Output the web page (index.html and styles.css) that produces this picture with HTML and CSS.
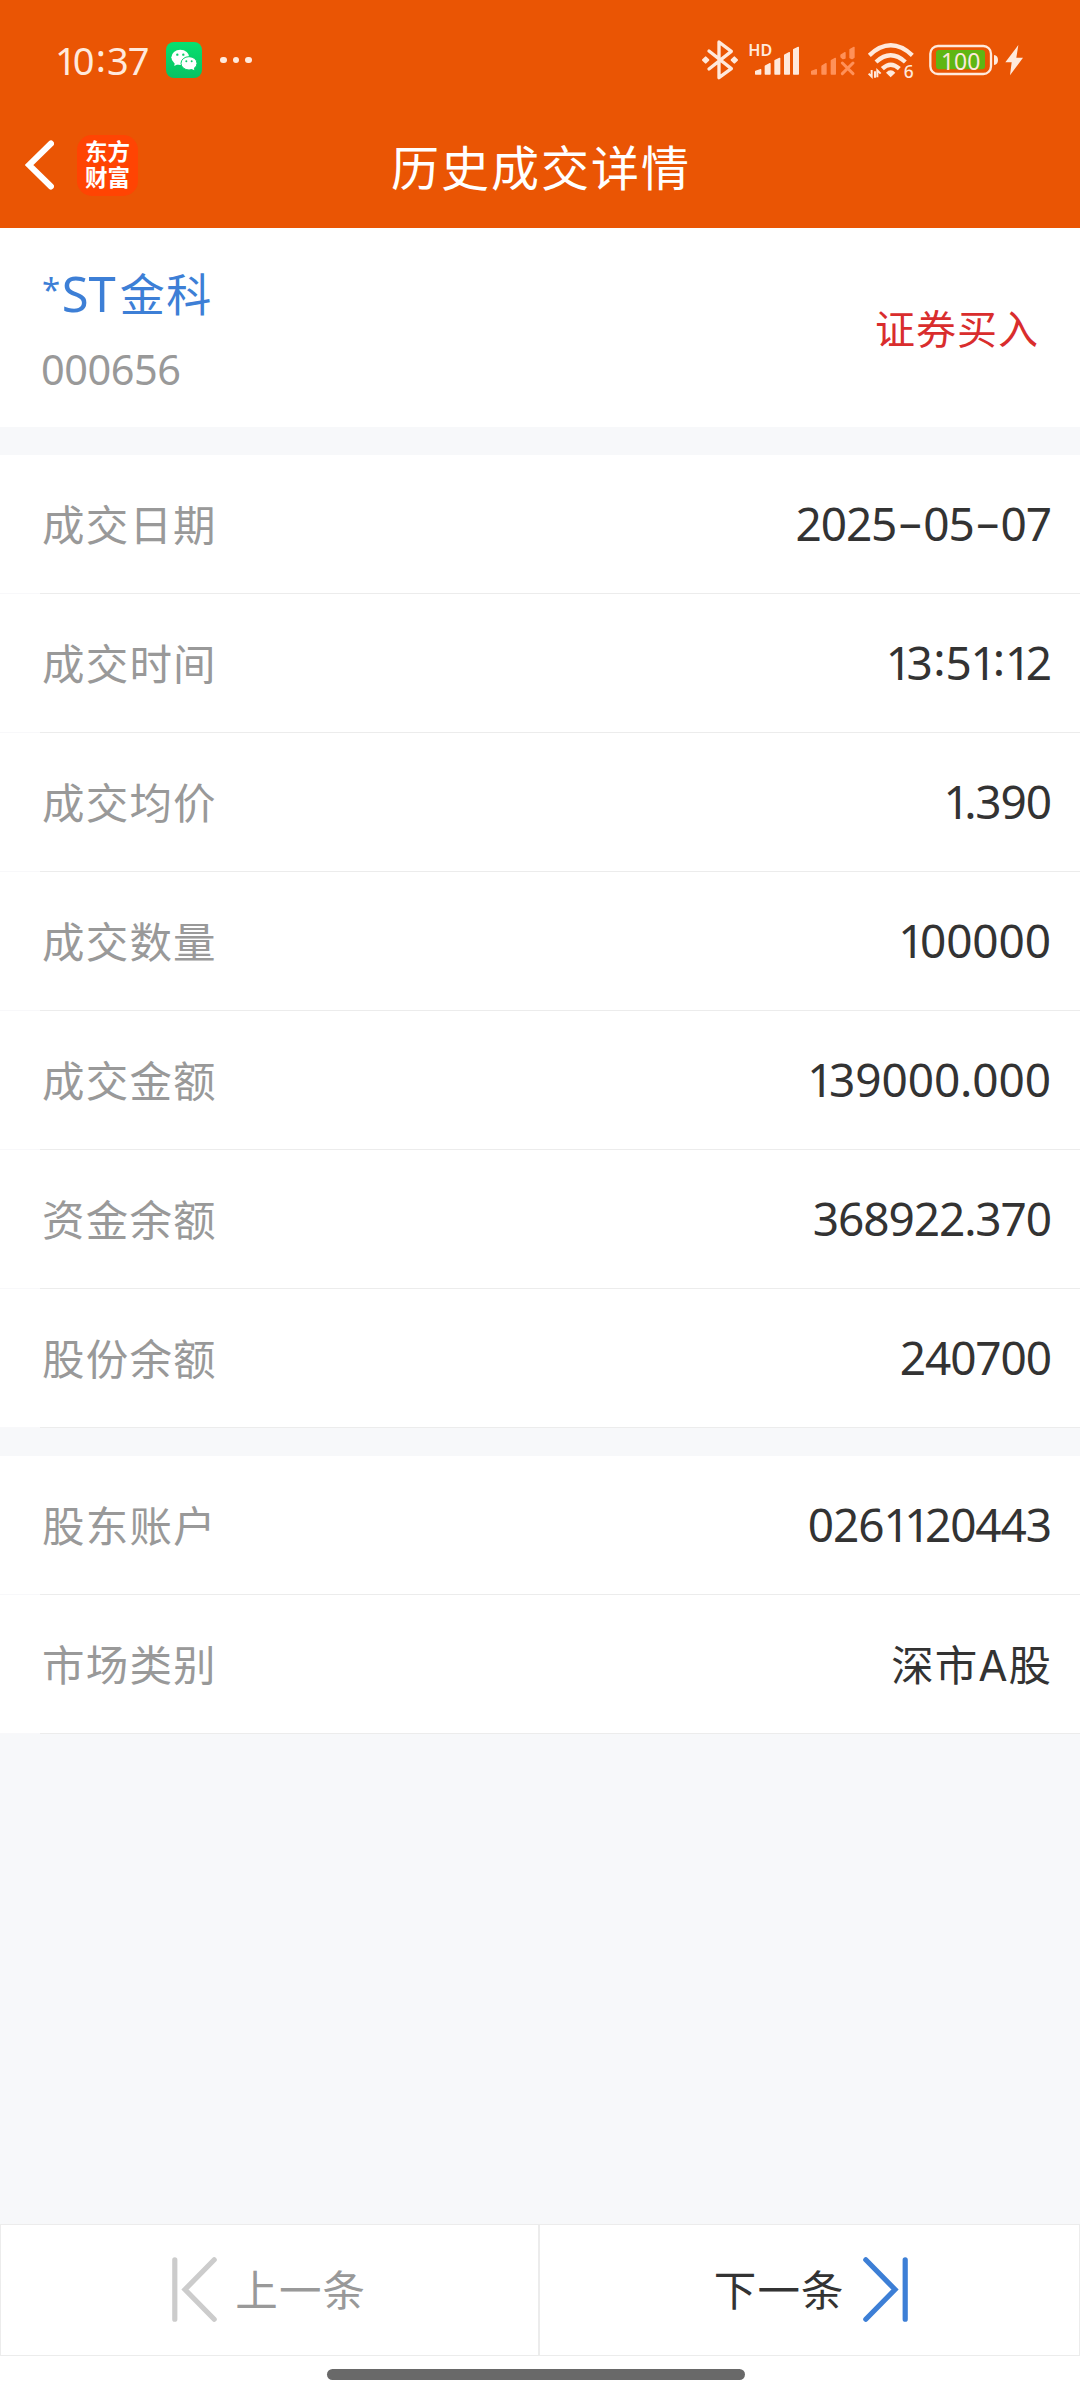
FILE: index.html
```html
<!DOCTYPE html>
<html lang="zh-Hans">
<head>
    <meta charset="UTF-8">
    <meta name="viewport" content="width=device-width, initial-scale=1.0">
    <title>历史成交详情</title>
    <link rel="stylesheet" href="styles.css">
</head>
<body>
    <header>
        <div class="status-bar">
            <span class="clock"><b>1</b>0<em>:</em>37</span>
            <svg class="wechat" viewBox="0 0 108 108">
                <defs>
                    <linearGradient id="wechatBg" x1="0" y1="0" x2="0" y2="1">
                        <stop offset="0" stop-color="#07e070"/>
                        <stop offset="1" stop-color="#08c263"/>
                    </linearGradient>
                </defs>
                <rect width="108" height="108" rx="24" fill="url(#wechatBg)"/>
                <path d="M26 62 L25 72 L36 66 Z" fill="#fff"/>
                <ellipse cx="43" cy="46" rx="27" ry="23" fill="#fff"/>
                <ellipse cx="69" cy="64" rx="24" ry="20" fill="#fff" stroke="#08cf69" stroke-width="3"/>
                <path d="M76 80 L85 85 L83 75 Z" fill="#fff"/>
                <g fill="#08cf69">
                    <circle cx="34" cy="38" r="3.5"/>
                    <circle cx="52" cy="38" r="3.5"/>
                    <circle cx="61" cy="58" r="3"/>
                    <circle cx="77" cy="58" r="3"/>
                </g>
            </svg>
            <span class="dots"><i></i><i></i><i></i></span>

            <div class="status-icons">
                <svg class="bluetooth" viewBox="0 0 108 120">
                    <path d="M21 33 L88 86 L51 113 V6 L88 34 L21 87" fill="none" stroke="#ffe9dc" stroke-width="10" stroke-linecap="round" stroke-linejoin="round"/>
                    <path d="M3 60 L11 52 L19 60 L11 68 Z M89 60 L97 52 L105 60 L97 68 Z" fill="#ffe9dc" stroke="#ffe9dc" stroke-width="6" stroke-linejoin="round"/>
                </svg>
                <svg class="signal" viewBox="0 0 156 120">
                    <text x="1" y="48" font-size="48" font-weight="600" textLength="72" lengthAdjust="spacingAndGlyphs" fill="#ffe9dc">HD</text>
                    <g fill="#ffe9dc" stroke="#ffe9dc" stroke-width="4" stroke-linejoin="round">
                        <path d="M23 94 L38 89 V102 H23 Z"/>
                        <path d="M52 78 L66 71 V102 H52 Z"/>
                        <path d="M81 62 L95 55 V102 H81 Z"/>
                        <path d="M110 45 L124 38 V102 H110 Z"/>
                        <path d="M137 29 L151 22 V102 H137 Z"/>
                    </g>
                </svg>
                <svg class="signal-off" viewBox="0 0 138 120">
                    <g fill="#ff9159" stroke="#ff9159" stroke-width="4" stroke-linejoin="round">
                        <path d="M5 94 L19 89 V102 H5 Z"/>
                        <path d="M36 78 L48 71 V102 H36 Z"/>
                        <path d="M64 62 L76 55 V102 H64 Z"/>
                        <path d="M93 45 L105 38 V54 L99 56 L93 51 Z"/>
                        <path d="M120 29 L132 22 V52 L126 56 L120 53 Z"/>
                    </g>
                    <path d="M97 69 L129 101 M129 69 L97 101" fill="none" stroke="#ff9159" stroke-width="9" stroke-linecap="round"/>
                </svg>
                <svg class="wifi" viewBox="0 0 144 120">
                    <g fill="none" stroke="#ffe9dc" stroke-width="13">
                        <path d="M7 46 Q71 -14 136 46"/>
                        <path d="M27 66 Q71 26 115 66"/>
                        <path d="M46 86 Q71 62 97 86"/>
                    </g>
                    <path d="M57 98 Q71 84 85 98 L71 112 Z" fill="#ffe9dc"/>
                    <path d="M5 101 L14 110 V90 M24 113 V94 M31 112 V91 L41 101" fill="none" stroke="#ffe9dc" stroke-width="6"/>
                    <text x="110" y="115" font-size="52" font-weight="500" fill="#ffe9dc">6</text>
                </svg>
                <svg class="battery" viewBox="0 0 207 120">
                    <rect x="4" y="18" width="182" height="84" rx="23" fill="none" stroke="#ffe9dc" stroke-width="7"/>
                    <rect x="21" y="30" width="147" height="58" rx="9" fill="#5fb613"/>
                    <path d="M195 45 Q207 46 207 60 Q207 74 195 75 Z" fill="#ffe9dc"/>
                    <text x="36" y="90" font-size="73" fill="#ffe9dc" textLength="118" lengthAdjust="spacingAndGlyphs">100</text>
                </svg>
                <svg class="bolt" viewBox="0 0 60 120">
                    <path d="M43 15 L4 67 H23 L18 106 L57 53 H37 Z" fill="#ffe9dc"/>
                </svg>
            </div>
        </div>
        <div class="title-bar">
            <svg class="back" viewBox="0 0 29 50">
                <path d="M26 3.5 L4 25 L26 46.5" fill="none" stroke="#fff" stroke-width="6" stroke-linecap="round"/>
            </svg>
            <div class="logo">东方<br>财富</div>
            <h1>历史成交详情</h1>
        </div>
    </header>

    <section class="stock">
        <div>
            <div class="stock-name"><span class="star">*</span><span class="st">ST</span>金科</div>
            <div class="stock-code">000656</div>
        </div>
        <div class="trade-type">证券买入</div>
    </section>

    <section class="detail">
        <div class="row"><span class="label">成交日期</span><span class="value">2025<i>–</i>05<i>–</i>07</span></div>
        <div class="row"><span class="label">成交时间</span><span class="value"><b>1</b>3<em>:</em>5<b>1</b><em>:</em><b>1</b>2</span></div>
        <div class="row"><span class="label">成交均价</span><span class="value"><b>1</b>.390</span></div>
        <div class="row"><span class="label">成交数量</span><span class="value wide"><b>1</b>00000</span></div>
        <div class="row"><span class="label">成交金额</span><span class="value wide"><b>1</b>39000.000</span></div>
        <div class="row"><span class="label">资金余额</span><span class="value">368922.370</span></div>
        <div class="row"><span class="label">股份余额</span><span class="value">240700</span></div>
    </section>

    <section class="detail">
        <div class="row"><span class="label">股东账户</span><span class="value">026<b>1</b><b>1</b>20443</span></div>
        <div class="row"><span class="label">市场类别</span><span class="cn-value">深市A股</span></div>
    </section>

    <footer>
        <div class="pager">
            <div class="page-btn prev">
                <svg viewBox="0 0 45 65">
                    <path d="M2.8 2.8 V62.2 M42.2 2.8 L13 32.5 L42.2 62.2" fill="none" stroke="#ccc" stroke-width="5.2" stroke-linecap="round"/>
                </svg>
                <span>上一条</span>
            </div>
            <div class="page-btn next">
                <span>下一条</span>
                <svg viewBox="0 0 45 65">
                    <path d="M42.2 2.8 V62.2 M2.8 2.8 L32 32.5 L2.8 62.2" fill="none" stroke="#3d7fd6" stroke-width="5.2" stroke-linecap="round"/>
                </svg>
            </div>
        </div>
        <div class="home-bar"></div>
    </footer>
</body>
</html>
```
FILE: styles.css
```css
* {
    box-sizing: border-box;
}

body {
    margin: 0;
    width: 1080px;
    height: 2400px;
    display: flex;
    flex-direction: column;
    background-color: #f7f8fa;
    color: #333;
    font-family: Inter, "Noto Sans CJK SC", sans-serif;
    overflow: hidden;
}

header {
    height: 228px;
    background-color: #ea5504;
    color: #fff;
}

/* 状态栏 */
.status-bar {
    height: 120px;
    display: flex;
    align-items: center;
    padding: 0 56px 0 55px;
}

.clock {
    width: 111px;
    font-family: "Noto Sans", sans-serif;
    font-size: 38px;
    line-height: 40px;
    letter-spacing: -0.9px;
    color: #ffe9dc;
}

.clock b {
    margin-right: -3px;
    font-weight: inherit;
}

.clock em {
    position: relative;
    top: -3px;
    margin: 0 2px;
    font-style: normal;
}

.wechat {
    width: 36px;
    height: 36px;
}

.dots {
    display: flex;
    gap: 6px;
    margin-left: 18px;
}

.dots i {
    width: 6.5px;
    height: 6.5px;
    border-radius: 50%;
    background-color: #ffe9dc;
}

.status-icons {
    display: flex;
    margin-left: auto;
}

.status-icons svg {
    height: 40px;
    overflow: visible;
}

.status-icons text {
    font-family: "Noto Sans", sans-serif;
}

.bluetooth {
    width: 36px;
}

.signal {
    width: 52px;
    margin-left: 10px;
}

.signal-off {
    width: 46px;
    margin-left: 10px;
}

.wifi {
    width: 48px;
    margin-left: 11px;
}

.battery {
    width: 69px;
    margin-left: 14px;
}

.bolt {
    width: 20px;
    margin-left: 6px;
}

/* 标题栏 */
.title-bar {
    position: relative;
    height: 90px;
    display: flex;
    align-items: center;
    padding-left: 25px;
}

.back {
    width: 29px;
    height: 50px;
}

.logo {
    width: 61px;
    height: 61px;
    margin-left: 23px;
    padding-top: 4px;
    border-radius: 15px;
    background-color: #ff4403;
    font-size: 22.5px;
    font-weight: 700;
    line-height: 26px;
    text-align: center;
}

h1 {
    position: absolute;
    left: 0;
    right: 0;
    margin: 8px 0 0;
    font-size: 48px;
    font-weight: 400;
    line-height: 60px;
    letter-spacing: 2px;
    text-indent: 2px;
    text-align: center;
}

/* 股票信息 */
.stock {
    height: 199px;
    display: flex;
    justify-content: space-between;
    padding: 35px 41px 0 41px;
    background-color: #fff;
}

.stock-name {
    display: flex;
    height: 66px;
    line-height: 65px;
    font-size: 45px;
    letter-spacing: 1.5px;
    color: #3d7fd6;
}

.stock-name .star {
    margin: -6px 0 0 1px;
    font-family: "Noto Sans", sans-serif;
    font-size: 33px;
}

.stock-name .st {
    margin: -2px 4px 0 0;
    font-family: "Noto Sans", sans-serif;
    font-size: 49px;
    letter-spacing: 0;
}

.stock-code {
    margin-top: 16px;
    font-family: "Noto Sans", sans-serif;
    font-size: 41.5px;
    line-height: 48px;
    letter-spacing: -0.5px;
    color: #999;
}

.trade-type {
    margin-top: 37px;
    font-size: 40px;
    line-height: 60px;
    letter-spacing: 1px;
    color: #d92d2d;
}

/* 成交明细 */
.detail {
    margin-top: 28px;
}

.row {
    height: 139px;
    display: flex;
    align-items: center;
    justify-content: space-between;
    padding: 0 28px 0 42px;
    background-color: #fff;
    border-style: solid;
    border-width: 0 0 1px;
    border-image: linear-gradient(to right, #f8f8fa 41px, #ececec 41px) 1;
}

.label {
    margin-bottom: 4px;
    font-size: 42.5px;
    letter-spacing: 1.2px;
    color: #999;
}

.value {
    margin: 0 1px 3px 0;
    font-family: "Noto Sans", sans-serif;
    font-size: 46px;
    letter-spacing: -1.1px;
}

.wide {
    letter-spacing: -0.1px;
}

/* 数字 1 比其他数字窄 */
.value b {
    margin-right: -4.5px;
    font-weight: inherit;
}

.value em {
    position: relative;
    top: -4px;
    margin: 0 1px 0 1.5px;
    font-style: normal;
}

.value i {
    position: relative;
    top: -3px;
    margin: 0 2.5px;
    font-style: normal;
}

.cn-value {
    margin-bottom: 4px;
    font-size: 42.5px;
    letter-spacing: 1px;
}

/* 底部翻页 */
footer {
    margin-top: auto;
    height: 176px;
    background-color: #fff;
}

.pager {
    display: flex;
    height: 132px;
}

.page-btn {
    flex: 1;
    display: flex;
    align-items: center;
    justify-content: center;
    gap: 18px;
    padding-bottom: 2px;
    border: 1px solid #ececec;
    font-size: 42.5px;
    letter-spacing: 1.2px;
}

.page-btn svg {
    width: 45px;
    height: 65px;
}

.page-btn span {
    margin-bottom: 3px;
}

.prev {
    color: #999;
}

.next {
    padding-left: 3px;
}

.home-bar {
    width: 418px;
    height: 11px;
    margin: 13px 0 0 327px;
    border-radius: 6px;
    background-color: #696969;
}
```
